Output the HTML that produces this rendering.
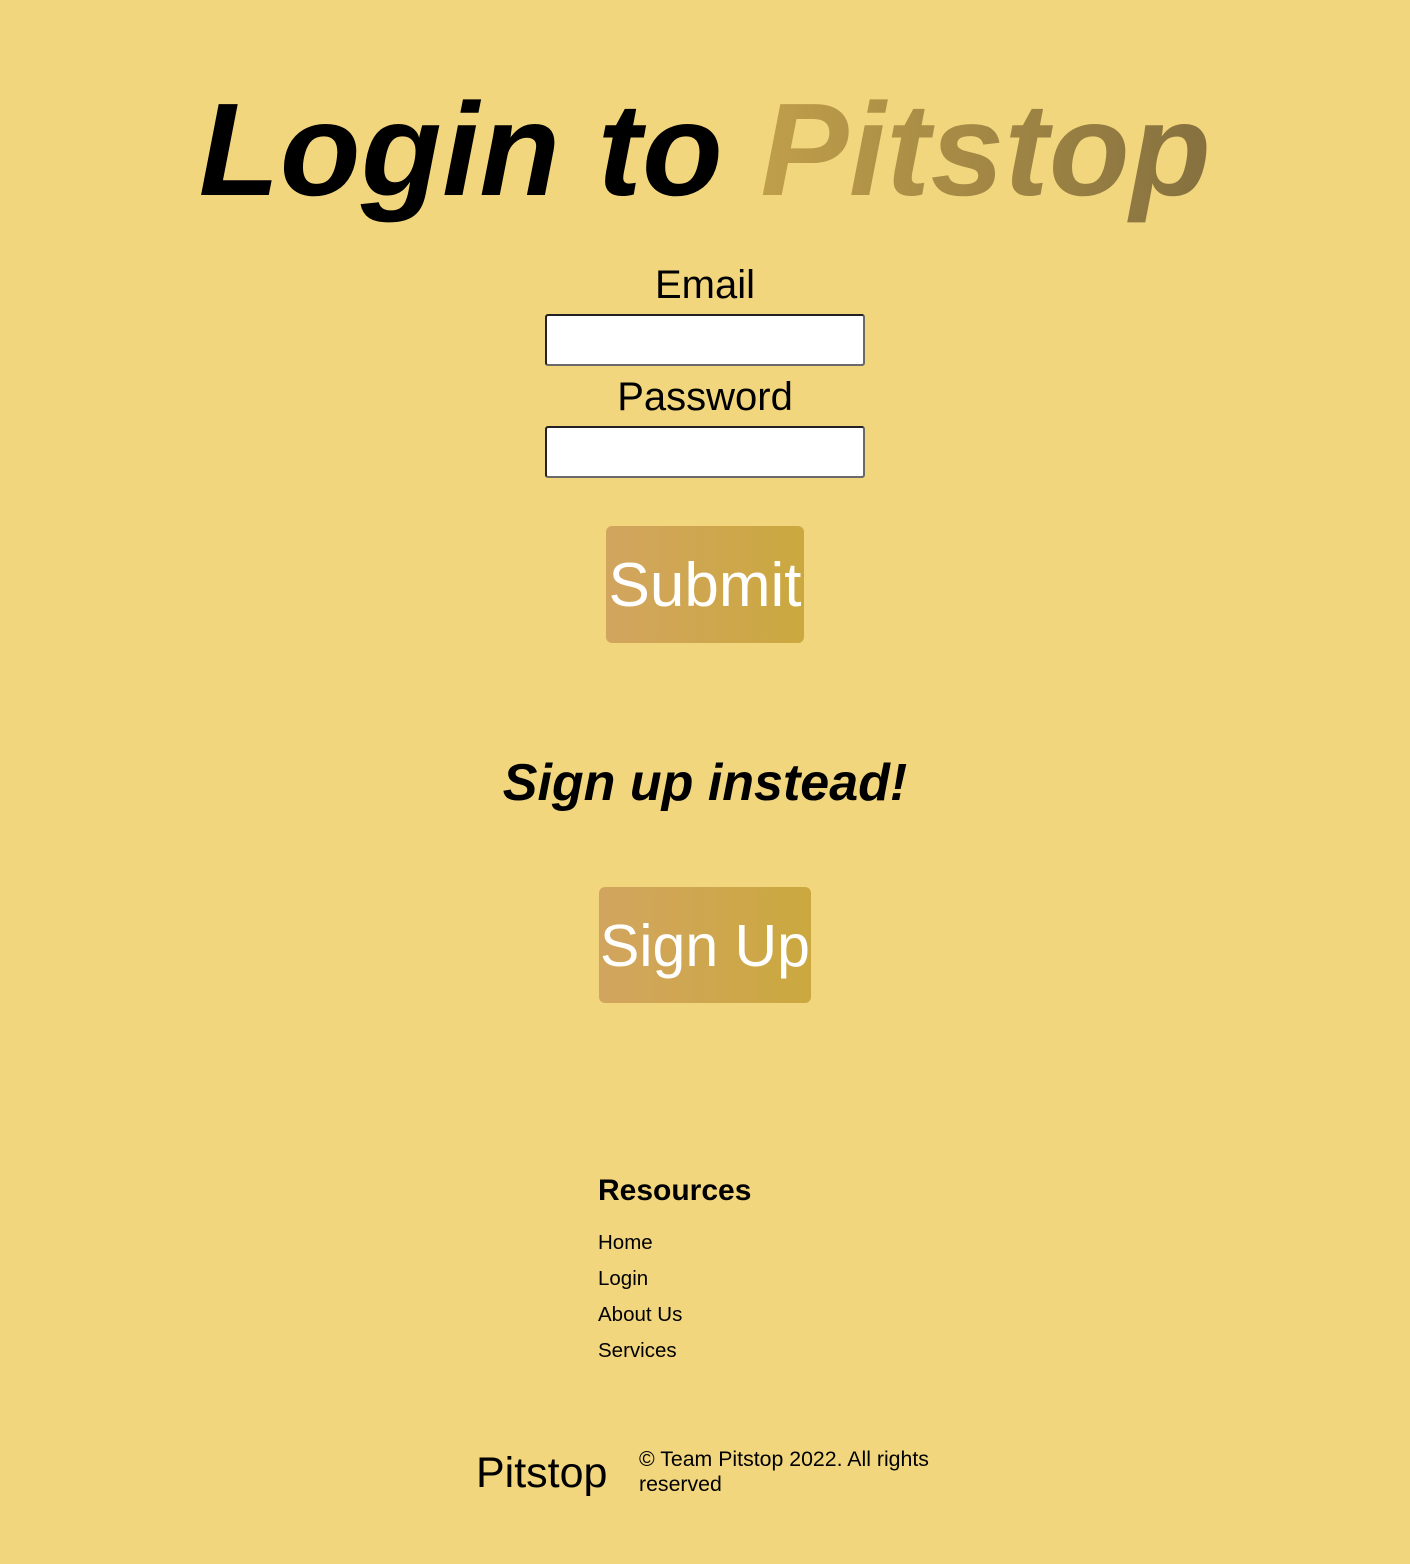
<!DOCTYPE html>
<html><head><meta charset="utf-8"><style>
html,body{margin:0;padding:0}
body{width:1410px;height:1564px;background:#f1d67e;position:relative;overflow:hidden;font-family:"Liberation Sans",sans-serif;color:#000}
.a{position:absolute;line-height:1;white-space:nowrap}
.c{left:0;width:1410px;text-align:center}
.inp{position:absolute;left:545px;width:316px;height:48px;background:#fff;border:2px solid #6a6a6a;border-top-color:#222;border-left-color:#222;border-radius:3px}
.btn{position:absolute;border-radius:6px;background:linear-gradient(90deg,#d2a55f,#cba83f)}
.pit{background:linear-gradient(90deg,#c09f4a,#85703f);-webkit-background-clip:text;background-clip:text;color:transparent}
</style></head><body>
<div class="a c" style="top:84px;font-size:132px;font-weight:bold;font-style:italic;letter-spacing:0.5px">Login to <span class="pit">Pitstop</span></div>
<div class="a c" style="top:265px;font-size:40px">Email</div>
<div class="inp" style="top:314px"></div>
<div class="a c" style="top:377px;font-size:40px">Password</div>
<div class="inp" style="top:426px"></div>
<div class="btn" style="left:606px;top:526px;width:198px;height:117px"></div>
<div class="a c" style="top:555px;font-size:62px;color:#fff">Submit</div>
<div class="a c" style="top:757px;font-size:52px;font-weight:bold;font-style:italic">Sign up instead!</div>
<div class="btn" style="left:599px;top:887px;width:212px;height:116px"></div>
<div class="a c" style="top:917px;font-size:59px;color:#fff">Sign Up</div>
<div class="a" style="left:598px;top:1176px;font-size:30px;font-weight:bold">Resources</div>
<div class="a" style="left:598px;top:1233px;font-size:20.5px">Home</div>
<div class="a" style="left:598px;top:1269px;font-size:20.5px">Login</div>
<div class="a" style="left:598px;top:1305px;font-size:20.5px">About Us</div>
<div class="a" style="left:598px;top:1341px;font-size:20.5px">Services</div>
<div class="a" style="left:476px;top:1452px;font-size:43px">Pitstop</div>
<div class="a" style="left:639px;top:1447px;font-size:21.3px;line-height:25px;white-space:normal;width:310px">© Team Pitstop 2022. All rights reserved</div>
</body></html>
